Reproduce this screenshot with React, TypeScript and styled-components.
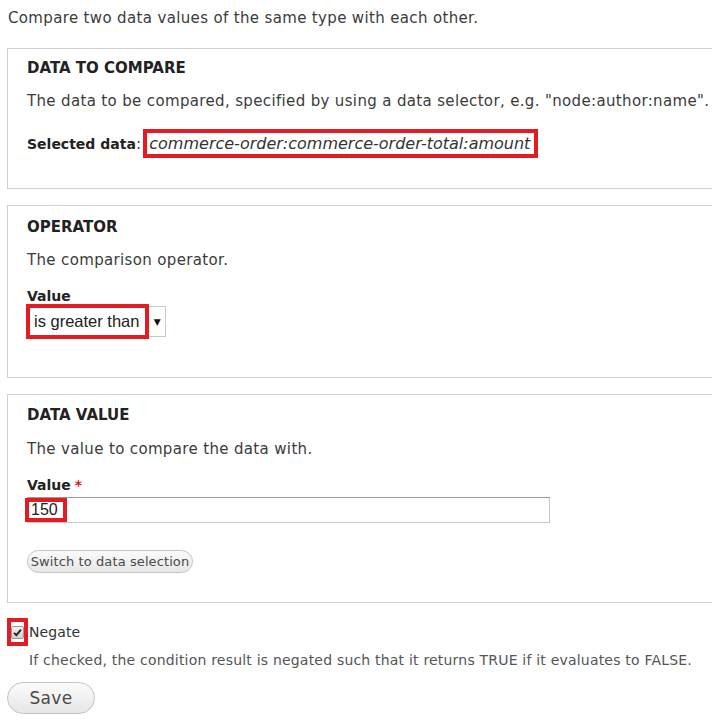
import styled, { createGlobalStyle } from "styled-components";

const GlobalStyle = createGlobalStyle`
    body {
        margin: 0;
        background: #fff;
        font-family: "DejaVu Sans", Verdana, sans-serif;
        font-size: 15px;
        letter-spacing: 0.35px;
        color: #3b3b3b;
    }
`

const Page = styled.div`
    padding: 8px 0 12px 7px;
    overflow: hidden;
`

const Intro = styled.p`
    margin: 0 0 20px 1px;
    line-height: 20px;
`

const Fieldset = styled.section<{ $padTop: number; $padBottom: number }>`
    border: 1px solid #cfcfcf;
    border-right: none;
    margin: 0 -20px 16px 0;
    padding: ${p => p.$padTop}px 0 ${p => p.$padBottom}px 19px;

    &:last-of-type {
        margin-bottom: 15px;
    }
`

const Legend = styled.h3`
    margin: 0;
    font-size: 15px;
    letter-spacing: 0;
    line-height: 20px;
    font-weight: bold;
    color: #222;
`

const Description = styled.p<{ $gap?: number }>`
    margin: ${p => p.$gap ?? 13}px 0 0;
    line-height: 20px;
`

const SelectedRow = styled.div`
    display: flex;
    align-items: center;
    margin-top: 18px;
    height: 29px;
`

const Strong = styled.span`
    font-size: 14px;
    letter-spacing: 0;
    font-weight: bold;
    color: #222;
`

const Highlight = styled.span`
    box-sizing: border-box;
    border: 4px solid #e31b23;
    display: inline-flex;
    align-items: center;
`

const SelectorValue = styled(Highlight)`
    margin-left: 2px;
    padding: 0 4px 0 2px;
    height: 29px;
    font-style: italic;
    font-size: 16px;
    letter-spacing: 0;
    color: #333;
`

const Label = styled.div<{ $gap: number }>`
    margin-top: ${p => p.$gap}px;
    line-height: 20px;
    font-size: 14px;
    letter-spacing: 0;
    font-weight: bold;
    color: #222;
`

const Required = styled.span`
    color: #d81b1b;
    margin-left: 4px;
`

const SelectBox = styled.div`
    display: inline-flex;
    align-items: stretch;
    height: 29px;
    border: 1px solid #c8c8c8;
    border-left: none;
    margin-left: -1px;
`

const SelectText = styled(Highlight)`
    margin: -3px 0;
    padding: 0 6px 0 4px;
    font-family: "Liberation Sans", Arial, sans-serif;
    font-size: 16.5px;
    letter-spacing: 0;
    color: #222;
`

const SelectArrow = styled.span`
    width: 16px;
    display: flex;
    align-items: center;
    justify-content: center;
    font-size: 9px;
    color: #111;
`

const TextField = styled.div`
    margin-top: 2px;
    width: 521px;
    height: 24px;
    border: 1px solid #c6c6c6;
    border-top-color: #999;
    display: flex;
    align-items: center;
`

const FieldValue = styled(Highlight)`
    margin-left: -3px;
    height: 24px;
    padding: 0 5px 0 2px;
    font-family: "Liberation Sans", Arial, sans-serif;
    font-size: 16px;
    letter-spacing: 0;
    color: #222;
`

const PillButton = styled.button<{ $large?: boolean }>`
    display: block;
    font-family: "DejaVu Sans", Verdana, sans-serif;
    font-size: ${p => (p.$large ? 17 : 13)}px;
    letter-spacing: ${p => (p.$large ? 0.3 : 0.1)}px;
    color: #4a4a4a;
    border: 1px solid #c4c4c4;
    border-radius: 20px;
    background: linear-gradient(#fbfbfb, #e6e6e6);
    padding: 0;
    height: ${p => (p.$large ? 32 : 23)}px;
    width: ${p => (p.$large ? 88 : 166)}px;
    margin-top: ${p => (p.$large ? 0 : 27)}px;
`

const CheckRow = styled.div`
    display: flex;
    align-items: center;
    height: 28px;
`

const CheckHighlight = styled(Highlight)`
    width: 21px;
    height: 28px;
    justify-content: center;
    padding-top: 1px;
`

const CheckBox = styled.span`
    width: 11px;
    height: 11px;
    border: 1px solid #9a9a9a;
    border-radius: 2px;
    background: linear-gradient(#f2f2f2, #cfcfcf);
    display: flex;
    align-items: center;
    justify-content: center;
`

const CheckLabel = styled.span`
    margin-left: 1px;
    font-size: 14px;
    letter-spacing: 0.1px;
    color: #333;
`

const Help = styled.p`
    margin: 4px 0 12px 22px;
    line-height: 20px;
    font-size: 14px;
    letter-spacing: 0.2px;
    color: #555;
`

export default function App() {
    return <Page>
        <GlobalStyle />
        <Intro>Compare two data values of the same type with each other.</Intro>

        <Fieldset $padTop={9} $padBottom={30}>
            <Legend>DATA TO COMPARE</Legend>
            <Description>The data to be compared, specified by using a data selector, e.g. "node:author:name".</Description>
            <SelectedRow>
                <Strong>Selected data</Strong>:
                <SelectorValue>commerce-order:commerce-order-total:amount</SelectorValue>
            </SelectedRow>
        </Fieldset>

        <Fieldset $padTop={11} $padBottom={40}>
            <Legend>OPERATOR</Legend>
            <Description>The comparison operator.</Description>
            <Label $gap={16}>Value</Label>
            <SelectBox>
                <SelectText>is greater than</SelectText>
                <SelectArrow>▼</SelectArrow>
            </SelectBox>
        </Fieldset>

        <Fieldset $padTop={10} $padBottom={29}>
            <Legend>DATA VALUE</Legend>
            <Description $gap={14}>The value to compare the data with.</Description>
            <Label $gap={16}>Value<Required>*</Required></Label>
            <TextField>
                <FieldValue>150</FieldValue>
            </TextField>
            <PillButton>Switch to data selection</PillButton>
        </Fieldset>

        <CheckRow>
            <CheckHighlight>
                <CheckBox>
                    <svg width="9" height="9" viewBox="0 0 9 9">
                        <path d="M1 4.8 L3.4 7.2 L8 1.6" fill="none" stroke="#222" strokeWidth="1.9" />
                    </svg>
                </CheckBox>
            </CheckHighlight>
            <CheckLabel>Negate</CheckLabel>
        </CheckRow>
        <Help>If checked, the condition result is negated such that it returns TRUE if it evaluates to FALSE.</Help>
        <PillButton $large>Save</PillButton>
    </Page>
}
